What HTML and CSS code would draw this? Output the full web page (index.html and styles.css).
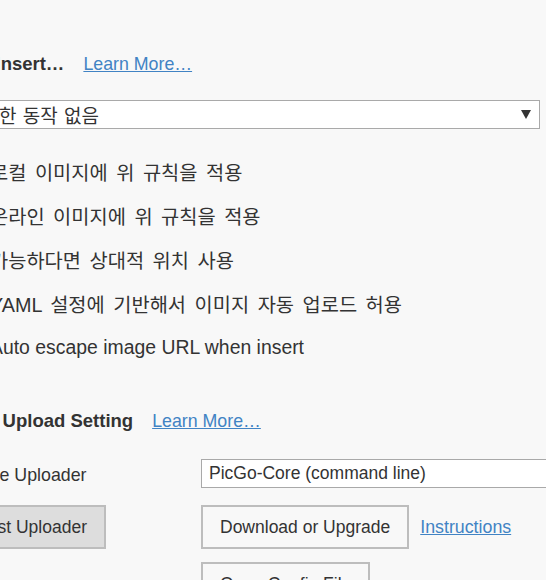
FILE: index.html
```html
<!DOCTYPE html>
<html lang="ko">
<head>
<meta charset="utf-8">
<title>Image Preferences</title>
<link rel="stylesheet" href="styles.css">
</head>
<body>
<div class="pane">
  <section class="group group-insert">
    <div class="group-head group-head-insert">
      <h3 class="group-title">When Insert…</h3>
      <a class="link" href="#">Learn More…</a>
    </div>
    <div class="group-body">
      <div class="select select-wide">
        <span class="select-text select-text-ko">특별한 동작 없음</span>
        <span class="caret"></span>
      </div>
      <ul class="checks">
        <li class="check"><span class="box"></span><span class="check-label">로컬 이미지에 위 규칙을 적용</span></li>
        <li class="check"><span class="box"></span><span class="check-label">온라인 이미지에 위 규칙을 적용</span></li>
        <li class="check"><span class="box"></span><span class="check-label">가능하다면 상대적 위치 사용</span></li>
        <li class="check"><span class="box"></span><span class="check-label">YAML 설정에 기반해서 이미지 자동 업로드 허용</span></li>
        <li class="check"><span class="box"></span><span class="check-label check-label-en">Auto escape image URL when insert</span></li>
      </ul>
    </div>
  </section>

  <section class="group group-upload">
    <div class="group-head">
      <h3 class="group-title">Image Upload Setting</h3>
      <a class="link" href="#">Learn More…</a>
    </div>
    <div class="group-body">
      <div class="row row-uploader">
        <div class="row-label">Image Uploader</div>
        <div class="select select-uploader"><span class="select-text">PicGo-Core (command line)</span></div>
      </div>
      <div class="row row-actions">
        <div class="row-label"><button class="btn btn-gray">Test Uploader</button></div>
        <div class="row-value actions">
          <button class="btn">Download or Upgrade</button>
          <a class="link" href="#">Instructions</a>
        </div>
      </div>
      <div class="row row-config">
        <div class="row-label"></div>
        <div class="row-value"><button class="btn">Open Config File</button></div>
      </div>
    </div>
  </section>
</div>
</body>
</html>
```

FILE: styles.css
```css
html, body {
  margin: 0;
  padding: 0;
  overflow: hidden;
  background: #f8f8f8;
}

body {
  font-family: "Liberation Sans", "Noto Sans CJK KR", sans-serif;
  color: #333;
  font-size: 17.5px;
}

.pane {
  margin-left: -56px;
  width: 640px;
  padding-top: 52px;
}

.group-head {
  display: flex;
  align-items: baseline;
  gap: 19px;
  height: 24px;
  line-height: 24px;
}

.group-head-insert {
  margin-left: -4px;
}

.group-title {
  margin: 0;
  font-size: 18.5px;
  font-weight: bold;
  color: #333;
}

.link {
  color: #4183c4;
  text-decoration: underline;
  font-size: 17.8px;
}

.group-body {
  padding-left: 16px;
}

.select {
  box-sizing: border-box;
  height: 29px;
  border: 1px solid #a9a9a9;
  background: #fff;
  display: flex;
  align-items: center;
  justify-content: space-between;
  padding: 0 8px 0 6px;
  font-size: 17.5px;
}

.select-wide {
  margin-top: 24px;
  width: 580px;
  padding-left: 3px;
}

.select-text {
  white-space: nowrap;
}

.select-text-ko {
  font-size: 19px;
  word-spacing: 1px;
}

.caret {
  width: 0;
  height: 0;
  border-left: 5px solid transparent;
  border-right: 5px solid transparent;
  border-top: 9px solid #333;
}

.checks {
  list-style: none;
  margin: 20px 0 0;
  padding: 0;
}

.check {
  display: flex;
  align-items: center;
  height: 44px;
  white-space: nowrap;
}

.box {
  box-sizing: border-box;
  width: 13px;
  height: 13px;
  border: 1px solid #767676;
  border-radius: 2px;
  background: #fff;
  margin-right: 17px;
  flex: none;
}

.check-label {
  font-size: 19.8px;
  word-spacing: 3px;
}

.check-label-en {
  font-size: 19.4px;
  word-spacing: 0;
}

.group-upload {
  margin-top: 40px;
}

.row {
  display: grid;
  grid-template-columns: 241px 1fr;
  align-items: center;
}

.row-uploader {
  margin-top: 26px;
}

.row-uploader .row-label {
  padding-top: 3px;
}

.row-label {
  font-size: 17.8px;
  white-space: nowrap;
}

.select-uploader {
  width: 380px;
  padding-left: 7px;
}

.row-actions {
  margin-top: 17px;
}

.row-config {
  margin-top: 13px;
}

.actions {
  display: flex;
  align-items: center;
  gap: 11px;
}

.btn {
  box-sizing: border-box;
  height: 44px;
  padding: 0 17px;
  border: 2px solid #bdbdbd;
  background: transparent;
  color: #333;
  font-family: "Liberation Sans", "Noto Sans CJK KR", sans-serif;
  font-size: 17.5px;
  white-space: nowrap;
  border-radius: 0;
}

.btn-gray {
  background: #dddddd;
}
```
